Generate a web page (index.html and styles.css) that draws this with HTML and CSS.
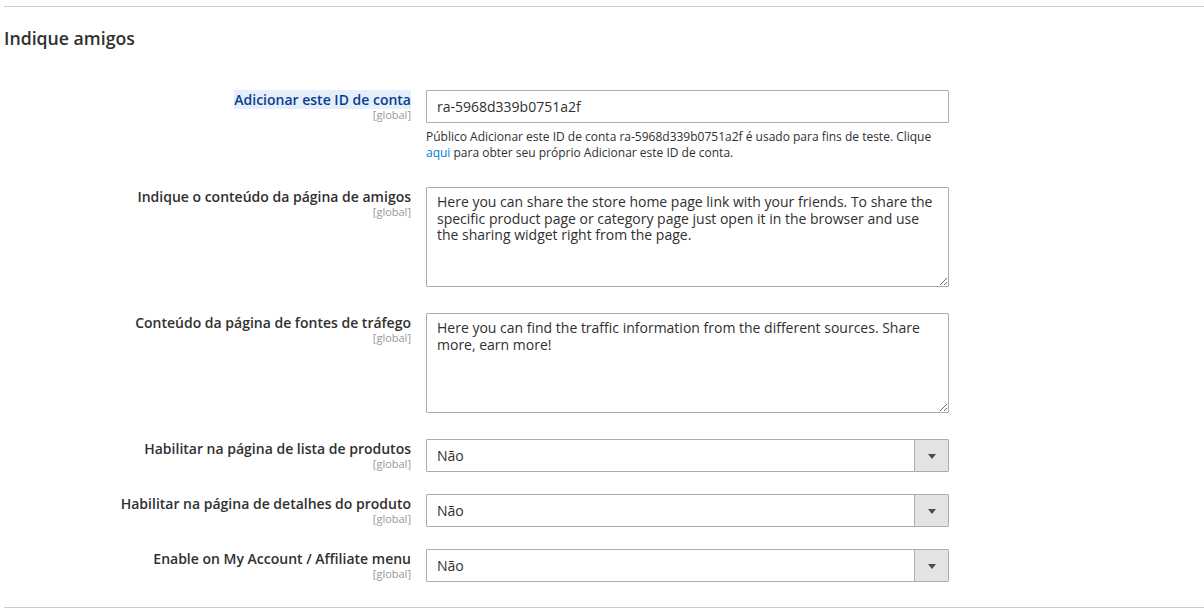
FILE: index.html
```html
<!DOCTYPE html>
<html lang="pt">
<head>
<meta charset="utf-8">
<link rel="stylesheet" href="styles.css">
<title>Indique amigos</title>
</head>
<body>
<div class="section">
  <h2 class="section-title">Indique amigos</h2>
  <div class="fields">
    <div class="row">
      <div class="label-col">
        <span class="label label-hl">Adicionar este ID de conta</span>
        <span class="scope">[global]</span>
      </div>
      <div class="control">
        <input class="input" type="text" value="ra-5968d339b0751a2f">
        <p class="note">Público Adicionar este ID de conta ra-5968d339b0751a2f é usado para fins de teste. Clique <a class="link" href="#">aqui</a> para obter seu próprio Adicionar este ID de conta.</p>
      </div>
    </div>
    <div class="row row-after-note">
      <div class="label-col">
        <span class="label">Indique o conteúdo da página de amigos</span>
        <span class="scope">[global]</span>
      </div>
      <div class="control">
        <textarea class="textarea">Here you can share the store home page link with your friends. To share the specific product page or category page just open it in the browser and use the sharing widget right from the page.</textarea>
      </div>
    </div>
    <div class="row row-after-area">
      <div class="label-col">
        <span class="label">Conteúdo da página de fontes de tráfego</span>
        <span class="scope">[global]</span>
      </div>
      <div class="control">
        <textarea class="textarea">Here you can find the traffic information from the different sources. Share more, earn more!</textarea>
      </div>
    </div>
    <div class="row row-after-area">
      <div class="label-col">
        <span class="label">Habilitar na página de lista de produtos</span>
        <span class="scope">[global]</span>
      </div>
      <div class="control">
        <div class="select"><span class="select-value">Não</span><span class="select-btn"><span class="arrow"></span></span></div>
      </div>
    </div>
    <div class="row">
      <div class="label-col">
        <span class="label">Habilitar na página de detalhes do produto</span>
        <span class="scope">[global]</span>
      </div>
      <div class="control">
        <div class="select"><span class="select-value">Não</span><span class="select-btn"><span class="arrow"></span></span></div>
      </div>
    </div>
    <div class="row">
      <div class="label-col">
        <span class="label">Enable on My Account / Affiliate menu</span>
        <span class="scope">[global]</span>
      </div>
      <div class="control">
        <div class="select"><span class="select-value">Não</span><span class="select-btn"><span class="arrow"></span></span></div>
      </div>
    </div>
  </div>
</div>
</body>
</html>
```

FILE: styles.css
```css
* { box-sizing: border-box; }
html, body { margin: 0; padding: 0; background: #fff; }
body {
  font-family: "Open Sans", "Noto Sans", sans-serif;
  color: #303030;
  width: 1204px;
  height: 610px;
  overflow: hidden;
}
.section {
  margin: 6px 0 0 4px;
  border-top: 1px solid #cccccc;
  border-bottom: 1px solid #cccccc;
  padding-bottom: 25px;
}
.section-title {
  margin: 21px 0 0 0;
  font-size: 17.7px;
  line-height: 20px;
  font-weight: 600;
  color: #303030;
}
.fields {
  margin-top: 42px;
  display: flex;
  flex-direction: column;
}
.row {
  display: grid;
  grid-template-columns: 407px 523px;
  column-gap: 15px;
  margin-top: 22px;
}
.row:first-child { margin-top: 0; }
.row-after-note { margin-top: 26px; }
.row-after-area { margin-top: 26px; }
.label-col {
  display: flex;
  flex-direction: column;
  align-items: flex-end;
  text-align: right;
}
.label {
  font-size: 14px;
  line-height: 19px;
  font-weight: 600;
  color: #303030;
}
.label-hl {
  background: #e4effb;
  color: #0b3d91;
}
.scope {
  font-size: 11px;
  line-height: 12px;
  color: #999999;
}
.control { display: flex; flex-direction: column; }
.input {
  display: block;
  width: 523px;
  height: 33px;
  margin: 0;
  border: 1px solid #adadad;
  border-radius: 1px;
  padding: 0 10px;
  font-family: "Open Sans", "Noto Sans", sans-serif;
  font-size: 14px;
  color: #303030;
  background: #fff;
  outline: none;
}
.note {
  margin: 6px 0 0 0;
  font-size: 12px;
  line-height: 16px;
  color: #303030;
}
.link { color: #007bdb; text-decoration: none; }
.textarea {
  display: block;
  width: 523px;
  height: 100px;
  margin: 0;
  border: 1px solid #adadad;
  border-radius: 1px;
  padding: 6px 10px 4px;
  font-family: "Open Sans", "Noto Sans", sans-serif;
  font-size: 14px;
  line-height: 16.5px;
  color: #303030;
  background: #fff;
  resize: vertical;
  outline: none;
}
.select {
  position: relative;
  display: flex;
  align-items: center;
  width: 523px;
  height: 33px;
  border: 1px solid #adadad;
  border-radius: 1px;
  background: #fff;
}
.select-value {
  flex: 1;
  padding-left: 10px;
  font-size: 14px;
  color: #303030;
}
.select-btn {
  align-self: stretch;
  width: 34px;
  border-left: 1px solid #adadad;
  background: #e3e3e3;
  display: flex;
  align-items: center;
  justify-content: center;
}
.arrow {
  width: 0;
  height: 0;
  border-left: 4px solid transparent;
  border-right: 4px solid transparent;
  border-top: 5px solid #514943;
  margin-top: 1px;
}
```
